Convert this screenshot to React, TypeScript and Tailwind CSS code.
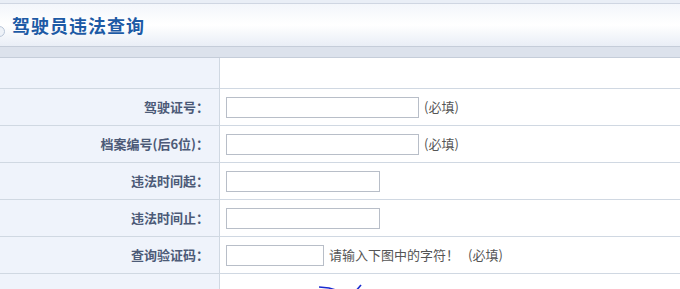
import React from 'react';

const rows = [
  { label: '驾驶证号：', width: 'w-[193px]', required: true },
  { label: '档案编号(后6位)：', width: 'w-[193px]', required: true },
  { label: '违法时间起：', width: 'w-[154px]', required: false },
  { label: '违法时间止：', width: 'w-[154px]', required: false },
];

const font = { fontFamily: '"Noto Sans CJK SC", "Liberation Sans", sans-serif' };

export default function App() {
  return (
    <div className="w-[680px] h-[289px] overflow-hidden bg-white" style={font}>
      {/* top strip */}
      <div className="h-[4px] bg-[#e9eef6] border-b border-[#cfd6e2]" />

      {/* header */}
      <div className="relative h-[42px] flex items-center bg-gradient-to-b from-[#f3f6fb] via-white to-[#e9eef6]">
        <div className="absolute left-[-6px] top-[22px] w-[11px] h-[11px] rounded-full border border-[#b9c6d8] bg-[#eef2f8]" />
        <h1 className="pl-[12px] text-[18px] font-bold text-[#1d5aa5] tracking-[1px]">驾驶员违法查询</h1>
      </div>

      {/* sub bar */}
      <div className="h-[12px] bg-[#dce2ec] border-y border-[#c5cdd9]" />

      {/* form table */}
      <div className="grid grid-cols-[220px_1fr] text-[13px]">
        <div className="h-[31px] bg-[#eff3fb] border-r border-b border-[#d0d8e2]" />
        <div className="h-[31px] border-b border-[#d0d8e2]" />

        {rows.map((row) => (
          <React.Fragment key={row.label}>
            <div className="h-[37px] bg-[#eff3fb] border-r border-b border-[#d0d8e2] flex items-center justify-end pr-[10px] font-bold text-[#4c5a77]">
              {row.label}
            </div>
            <div className="h-[37px] border-b border-[#d0d8e2] flex items-center pl-[6px] gap-[5px] text-[#555]">
              <input className={`${row.width} h-[21px] border border-[#b8bec8] bg-white outline-none`} />
              {row.required && <span>(必填)</span>}
            </div>
          </React.Fragment>
        ))}

        <div className="h-[37px] bg-[#eff3fb] border-r border-b border-[#d0d8e2] flex items-center justify-end pr-[10px] font-bold text-[#4c5a77]">
          查询验证码：
        </div>
        <div className="h-[37px] border-b border-[#d0d8e2] flex items-center pl-[6px] gap-[5px] text-[#555]">
          <input className="w-[98px] h-[21px] border border-[#b8bec8] bg-white outline-none" />
          <span>请输入下图中的字符！</span>
          <span className="ml-[4px]">(必填)</span>
        </div>

        <div className="h-[30px] bg-[#eff3fb] border-r border-[#d0d8e2]" />
        <div className="h-[30px] relative">
          <svg className="absolute left-[99px] top-[9px]" width="50" height="10" viewBox="0 0 50 10">
            <path d="M0 4 L10 5 L20 8" stroke="#1a2bd0" strokeWidth="1.6" fill="none" />
            <path d="M36 9 L42 2" stroke="#1a2bd0" strokeWidth="1.6" fill="none" />
          </svg>
        </div>
      </div>
    </div>
  );
}
